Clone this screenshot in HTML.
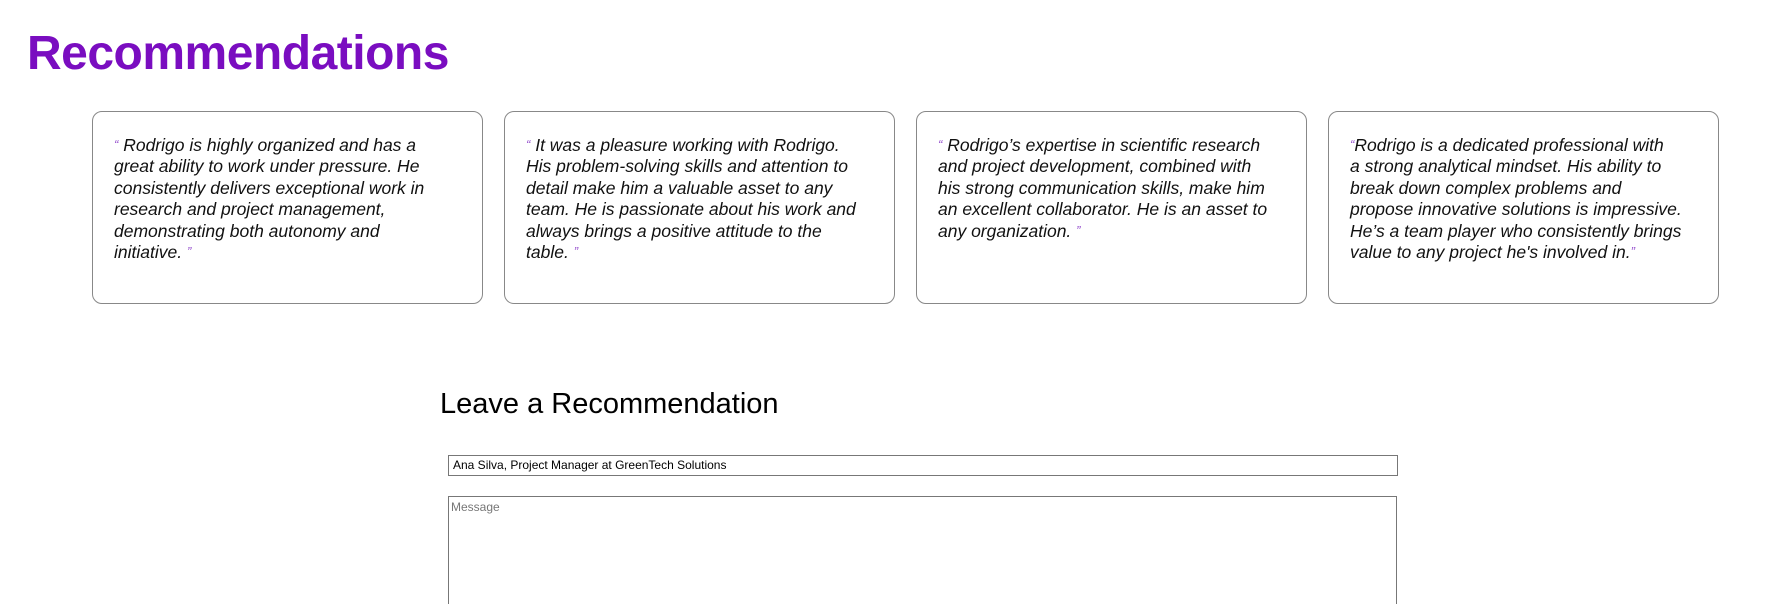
<!DOCTYPE html>
<html><head><meta charset="utf-8"><style>
html{overflow:hidden;height:604px}
body{margin:0;background:#fff;width:1791px;height:604px;overflow:hidden;font-family:"Liberation Sans",sans-serif;position:relative}
h1{position:absolute;left:27px;top:26px;margin:0;font-size:48px;font-weight:bold;color:#7a0dc0;letter-spacing:-0.5px}
.card{position:absolute;top:111px;width:391px;height:193px;border:1px solid #888;border-radius:10px;box-sizing:border-box}
.card p{margin:0;position:absolute;left:21px;top:23px;font-style:italic;font-size:17.5px;line-height:21.4px;color:#111;white-space:nowrap}
.q{color:#9b59d0;font-size:13px;line-height:0;vertical-align:2px}
h2{position:absolute;left:440px;top:388px;margin:0;font-weight:normal;font-size:29px;color:#000}
.in{position:absolute;left:448px;top:455px;width:950px;height:21px;border:1px solid #777;box-sizing:border-box;font-size:12px;line-height:19px;padding-left:4px;color:#000}
.ta{position:absolute;left:448px;top:496px;width:949px;height:108px;border:1px solid #777;border-bottom:none;box-sizing:border-box;font-size:12px;padding:3px 2px;color:#777}
</style></head><body>
<h1>Recommendations</h1>
<div class="card" style="left:92px"><p><span class="q">“</span> Rodrigo is highly organized and has a<br>great ability to work under pressure. He<br>consistently delivers exceptional work in<br>research and project management,<br>demonstrating both autonomy and<br>initiative. <span class="q">”</span></p></div>
<div class="card" style="left:504px"><p><span class="q">“</span> It was a pleasure working with Rodrigo.<br>His problem-solving skills and attention to<br>detail make him a valuable asset to any<br>team. He is passionate about his work and<br>always brings a positive attitude to the<br>table. <span class="q">”</span></p></div>
<div class="card" style="left:916px"><p><span class="q">“</span> Rodrigo’s expertise in scientific research<br>and project development, combined with<br>his strong communication skills, make him<br>an excellent collaborator. He is an asset to<br>any organization. <span class="q">”</span></p></div>
<div class="card" style="left:1328px"><p><span class="q">“</span>Rodrigo is a dedicated professional with<br>a strong analytical mindset. His ability to<br>break down complex problems and<br>propose innovative solutions is impressive.<br>He’s a team player who consistently brings<br>value to any project he's involved in.<span class="q">”</span></p></div>
<h2>Leave a Recommendation</h2>
<div class="in">Ana Silva, Project Manager at GreenTech Solutions</div>
<div class="ta">Message</div>
</body></html>
